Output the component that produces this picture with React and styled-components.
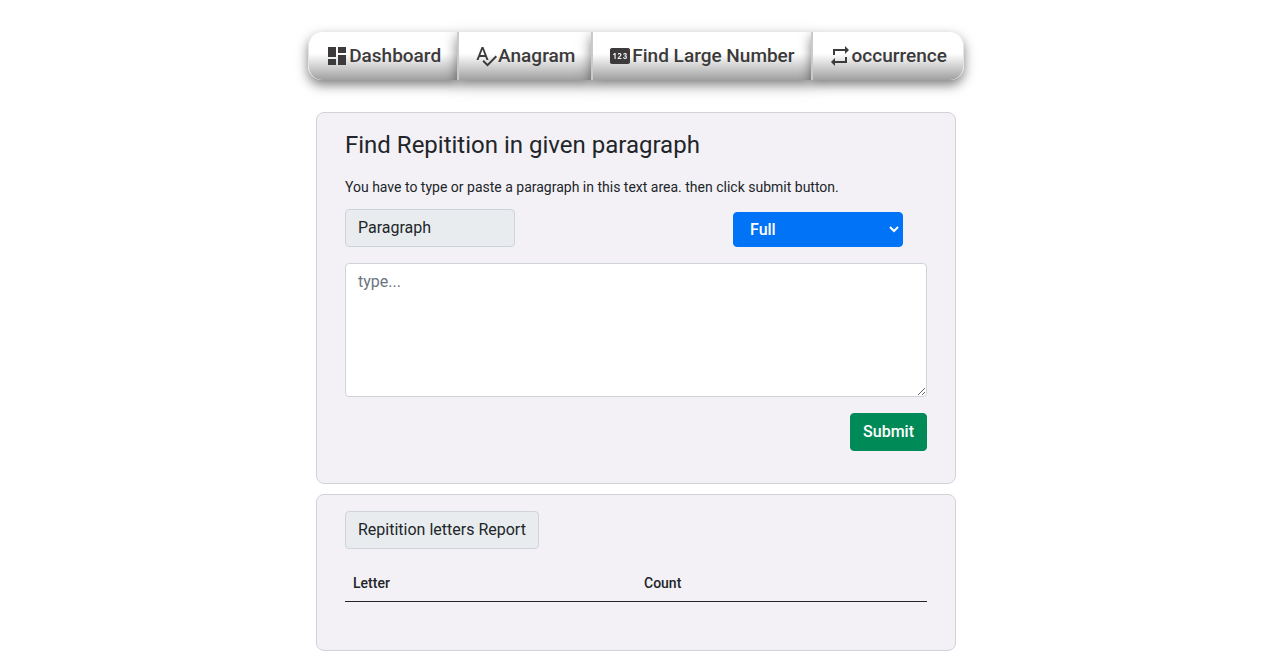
import React from "react";
import styled, { createGlobalStyle } from "styled-components";
import { MdDashboard, MdSpellcheck, MdPin, MdRepeat } from "react-icons/md";

const GlobalStyle = createGlobalStyle`
  *, *::before, *::after { box-sizing: border-box; }
  body {
    margin: 0;
    background: #fff;
    color: #212529;
    font-family: Roboto, "Liberation Sans", sans-serif;
    font-size: 16px;
    line-height: 24px;
  }
`;

const Page = styled.div`
  display: flex;
  flex-direction: column;
  align-items: center;
  padding: 32px 16px 14px 12px;
`;

const Tabs = styled.nav`
  display: flex;
  margin-bottom: 32px;
`;

const Tab = styled.a`
  display: flex;
  align-items: center;
  height: 48px;
  padding: 0 16px 0 15px;
  border-left: 2px solid #cacaca;
  background: linear-gradient(#fff 0%, #fff 45%, #a0a0a0 100%);
  box-shadow: 0 5px 12px rgba(0, 0, 0, 0.5);
  color: #3c3a3a;
  font-size: 19px;
  font-weight: 500;
  text-decoration: none;

  &:first-child {
    border-left: 1px solid #e4e4e4;
    padding-left: 16px;
    border-radius: 14px 0 0 14px;
  }

  &:last-child {
    border-right: 1px solid #e4e4e4;
    border-radius: 0 14px 14px 0;
  }

  svg { width: 24px; height: 24px; }
`;

const Card = styled.section`
  width: 100%;
  max-width: 640px;
  margin-bottom: 10px;
  padding: 16px 28px 32px;
  border: 1px solid #d2d2d8;
  border-radius: 8px;
  background: #f3f1f6;

  &:last-child { margin-bottom: 0; }
`;

const Title = styled.h1`
  margin: 0 0 16px;
  font-size: 24px;
  font-weight: 400;
  line-height: 32px;
`;

const Hint = styled.p`
  margin: 0 0 12px;
  font-size: 14px;
  line-height: 20px;
`;

const Controls = styled.div`
  display: flex;
  align-items: flex-end;
  justify-content: space-between;
  margin-bottom: 16px;
  padding-right: 24px;
`;

const labelBox = `
  padding: 6px 12px;
  border: 1px solid #ced4da;
  border-radius: 4px;
  background: #e8ecef;
`;

const FieldLabel = styled.label`
  ${labelBox}
  width: 170px;
`;

const ReportTitle = styled.h2`
  ${labelBox}
  width: fit-content;
  margin: 0 0 16px;
  font-size: 16px;
  font-weight: 400;
`;

const ModeSelect = styled.select`
  width: 170px;
  height: 35px;
  padding: 0 12px;
  border: 1px solid #0073f7;
  border-radius: 4px;
  background: #0073f7;
  color: #fff;
  font: 500 16px Roboto, sans-serif;
`;

const TextArea = styled.textarea`
  display: block;
  width: 100%;
  height: 134px;
  margin-bottom: 16px;
  padding: 6px 12px;
  border: 1px solid #ced4da;
  border-radius: 4px;
  background: #fff;
  color: #212529;
  font: 400 16px/24px Roboto, sans-serif;

  &::placeholder { color: #6c757d; opacity: 1; }
`;

const Submit = styled.button`
  display: block;
  margin-left: auto;
  padding: 6px 12px;
  border: 1px solid #008a58;
  border-radius: 4px;
  background: #008a58;
  color: #fff;
  font: 500 16px/24px Roboto, sans-serif;
`;

const Table = styled.table`
  width: 100%;
  margin-bottom: 16px;
  border-collapse: collapse;
  table-layout: fixed;
  font-size: 14px;
  line-height: 20px;

  th {
    padding: 8px;
    border-bottom: 1px solid #212529;
    font-weight: 500;
    text-align: left;
  }
`;

const tabs = [
  { label: "Dashboard", Icon: MdDashboard },
  { label: "Anagram", Icon: MdSpellcheck },
  { label: "Find Large Number", Icon: MdPin },
  { label: "occurrence", Icon: MdRepeat },
];

export default function App() {
  return (
    <>
      <GlobalStyle />
      <Page>
        <Tabs>
          {tabs.map(({ label, Icon }) => (
            <Tab key={label} href="#">
              <Icon aria-hidden="true" />
              {label}
            </Tab>
          ))}
        </Tabs>
        <Card>
          <Title>Find Repitition in given paragraph</Title>
          <Hint>You have to type or paste a paragraph in this text area. then click submit button.</Hint>
          <Controls>
            <FieldLabel htmlFor="paragraph">Paragraph</FieldLabel>
            <ModeSelect aria-label="Mode" defaultValue="Full">
              <option>Full</option>
            </ModeSelect>
          </Controls>
          <TextArea id="paragraph" placeholder="type..." />
          <Submit type="button">Submit</Submit>
        </Card>
        <Card>
          <ReportTitle>Repitition letters Report</ReportTitle>
          <Table>
            <thead>
              <tr>
                <th scope="col">Letter</th>
                <th scope="col">Count</th>
              </tr>
            </thead>
          </Table>
        </Card>
      </Page>
    </>
  );
}
